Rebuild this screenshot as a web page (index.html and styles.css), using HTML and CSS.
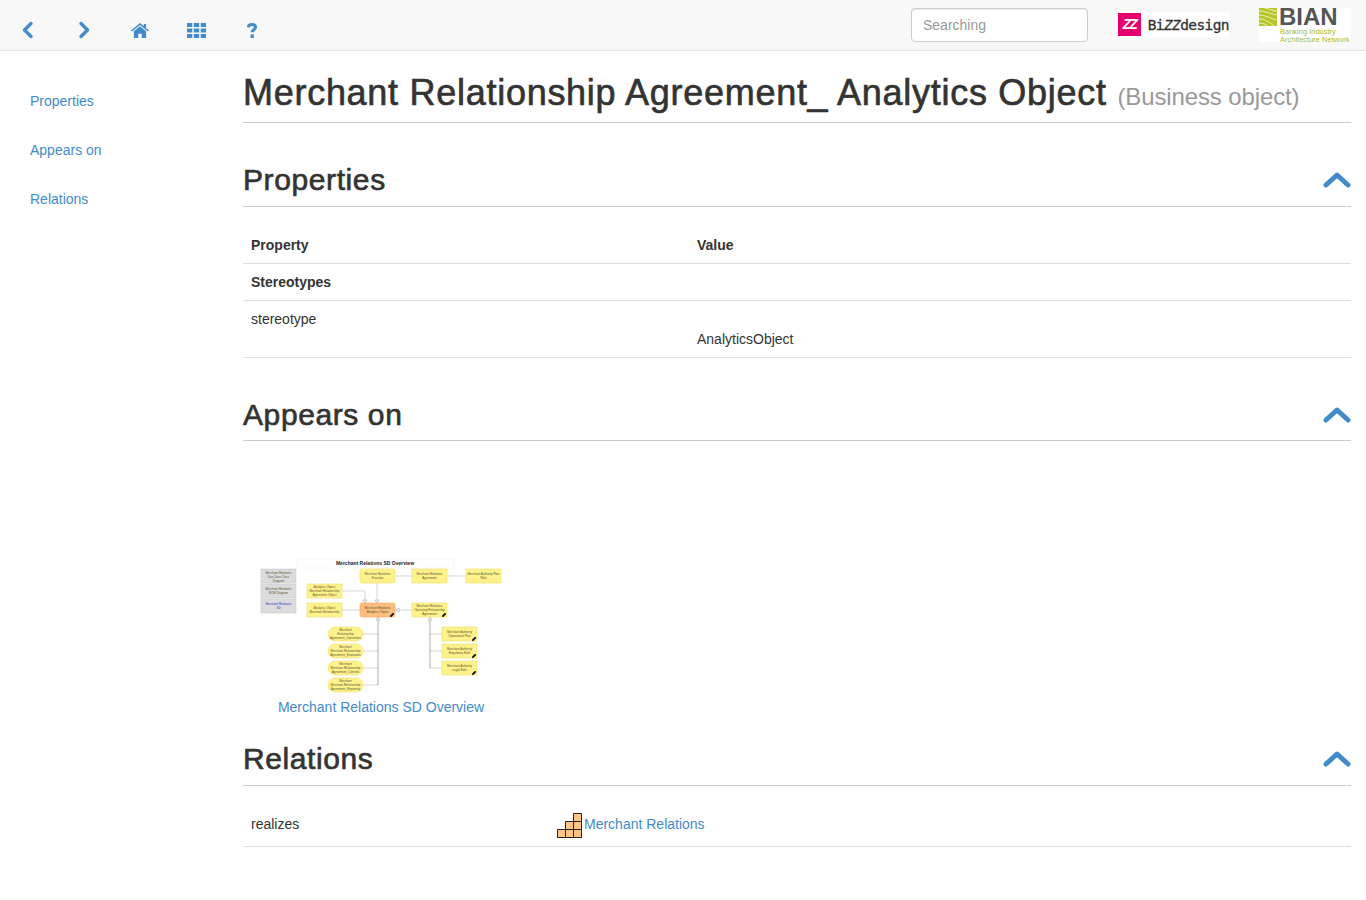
FILE: index.html
```html
<!DOCTYPE html>
<html lang="en">
<head>
<meta charset="UTF-8">
<meta name="viewport" content="width=device-width, initial-scale=1.0">
<title>Merchant Relationship Agreement_ Analytics Object</title>
<link rel="stylesheet" href="styles.css">
</head>
<body>

<div class="navbar">
    <div class="nav_icons">
        <a href="#" class="nav_icon" title="Back">
            <svg width="14" height="18" viewBox="0 0 14 18"><path class="chev" d="M10 2.500 3.500 9l6.500 6.500"/></svg>
        </a>
        <a href="#" class="nav_icon" title="Forward">
            <svg width="14" height="18" viewBox="0 0 14 18"><path class="chev" d="M4 2.500 10.500 9 4 15.500"/></svg>
        </a>
        <a href="#" class="nav_icon" title="Home">
            <svg width="18" height="15" viewBox="0 0 18 15"><path class="fill" d="M9 3.200 2.900 8.300V15h4.400v-4.200h3.400V15h4.400V8.300z"/><path class="fill" d="M9 0 0 7.400l1 1.200L9 2l8 6.600 1-1.200-3-2.500V1h-2.200v2z"/></svg>
        </a>
        <a href="#" class="nav_icon" title="Overview">
            <svg width="19" height="15" viewBox="0 0 19 15"><path class="fill" d="M0 0h5.300v4H0zM6.800 0h5.400v4H6.800zM13.700 0H19v4h-5.300zM0 5.500h5.300v4H0zM6.800 5.500h5.400v4H6.800zM13.700 5.500H19v4h-5.300zM0 11h5.300v4H0zM6.800 11h5.400v4H6.800zM13.700 11H19v4h-5.300z"/></svg>
        </a>
        <a href="#" class="nav_icon" title="Help">
            <svg width="10" height="15" viewBox="0 0 10 15"><path class="q" d="M1.300 4.300C1.400 2.600 2.800 1.500 4.900 1.500c2.100 0 3.600 1.100 3.600 2.800 0 2.400-3.300 2.500-3.300 5"/><path class="fill" d="M3.600 11.300h3.200V15H3.600z"/></svg>
        </a>
    </div>
    <input class="search" type="text" placeholder="Searching">
    <div class="bizz_logo">
        <span class="bizz_mark">ZZ</span>
        <span class="bizz_name">Bi<i>ZZ</i>design</span>
    </div>
    <div class="bian_logo">
        <svg class="bian_mark" width="18" height="18" viewBox="0 0 18 18">
            <rect width="18" height="18" fill="#b5c727"/>
            <path class="bian_lines" d="M0 3C7 3 12 6 18 7M0 7c6 0 10 3 18 5M0 11c5 0 9 2 15 7M0 15c3 0 6 1 9 3M6 0c4 1 8 3 12 3"/>
        </svg>
        <div class="bian_text">
            <div class="bian_name">BIAN</div>
            <div class="bian_sub">Banking Industry</div>
            <div class="bian_sub">Architecture Network</div>
        </div>
    </div>
</div>

<div class="page">
    <ul class="side">
        <li><a href="#properties">Properties</a></li>
        <li><a href="#appears">Appears on</a></li>
        <li><a href="#relations">Relations</a></li>
    </ul>

    <div class="content">
        <h1>Merchant Relationship Agreement_ Analytics Object <small>(Business object)</small></h1>

        <div class="sec_head" id="properties">
            <h2>Properties</h2>
            <svg class="collapse" width="28" height="18" viewBox="0 0 28 18"><path d="M3 14 14 4l11 10"/></svg>
        </div>
        <table class="props">
            <tr><th class="col_prop">Property</th><th>Value</th></tr>
            <tr><th colspan="2">Stereotypes</th></tr>
            <tr><td>stereotype</td><td class="val">AnalyticsObject</td></tr>
        </table>

        <div class="sec_head appears" id="appears">
            <h2>Appears on</h2>
            <svg class="collapse" width="28" height="18" viewBox="0 0 28 18"><path d="M3 14 14 4l11 10"/></svg>
        </div>
        <div class="thumb">
            <svg class="diagram" width="246" height="140" viewBox="258 555 246 140">
                <rect class="frame" x="297" y="559" width="157" height="9"/>
                <text class="d_title" x="375" y="564.700">Merchant Relations SD Overview</text>

                <path class="wire" d="M342 591h23v12M342 610h18M377 583v20M395 576h17M447 576h19M412 610h-17M378 685h-15M363 634h15M363 651h15M363 668h15M430 634h12M430 651h12M430 668h12"/>
                <path class="wire dark" d="M378 617v68M430 617v51"/>

                <rect class="legend" x="261" y="569" width="35" height="14"/>
                <rect class="legend" x="261" y="584" width="35" height="14"/>
                <rect class="legend" x="261" y="599" width="35" height="14"/>
                <text class="d_txt" x="278.500" y="573.500">Merchant Relations</text>
                <text class="d_txt" x="278.500" y="577.500">Use Case Class</text>
                <text class="d_txt" x="278.500" y="581.500">Diagram</text>
                <text class="d_txt" x="278.500" y="590">Merchant Relations</text>
                <text class="d_txt" x="278.500" y="594">BOM Diagram</text>
                <text class="d_link" x="278.500" y="605">Merchant Relations</text>
                <text class="d_link" x="278.500" y="609">SD</text>

                <rect class="box" x="307" y="584" width="35" height="14"/>
                <text class="d_txt" x="324.500" y="588">Analytics Object</text>
                <text class="d_txt" x="324.500" y="592">Merchant Relationship</text>
                <text class="d_txt" x="324.500" y="596">Agreement Object</text>
                <rect class="box" x="307" y="603" width="35" height="14"/>
                <text class="d_txt" x="324.500" y="609">Analytics Object</text>
                <text class="d_txt" x="324.500" y="613">Merchant Relationship</text>

                <rect class="box" x="360" y="569" width="35" height="14" rx="2"/>
                <text class="d_txt" x="377.500" y="575">Merchant Relations</text>
                <text class="d_txt" x="377.500" y="579">Function</text>
                <rect class="box" x="412" y="569" width="35" height="14"/>
                <text class="d_txt" x="429.500" y="575">Merchant Relations</text>
                <text class="d_txt" x="429.500" y="579">Agreement</text>
                <rect class="box" x="466" y="569" width="35" height="14"/>
                <text class="d_txt" x="483.500" y="575">Merchant Authority Plan</text>
                <text class="d_txt" x="483.500" y="579">Role</text>

                <rect class="box main" x="360" y="603" width="35" height="14" rx="2"/>
                <text class="d_txt" x="377.500" y="609">Merchant Relations</text>
                <text class="d_txt" x="377.500" y="613">Analytics Object</text>
                <rect class="box" x="412" y="603" width="35" height="14"/>
                <text class="d_txt" x="429.500" y="607">Merchant Relations</text>
                <text class="d_txt" x="429.500" y="611">Operating Relationship</text>
                <text class="d_txt" x="429.500" y="615">Agreement</text>

                <rect class="box" x="442" y="627" width="35" height="14"/>
                <text class="d_txt" x="459.500" y="633">Merchant Authority</text>
                <text class="d_txt" x="459.500" y="637">Operational Plan</text>
                <rect class="box" x="442" y="644" width="35" height="14"/>
                <text class="d_txt" x="459.500" y="650">Merchant Authority</text>
                <text class="d_txt" x="459.500" y="654">Regulatory Role</text>
                <rect class="box" x="442" y="661" width="35" height="14"/>
                <text class="d_txt" x="459.500" y="667">Merchant Authority</text>
                <text class="d_txt" x="459.500" y="671">Legal Role</text>

                <rect class="box" x="328" y="627" width="35" height="14" rx="7"/>
                <text class="d_txt" x="345.500" y="631">Merchant</text>
                <text class="d_txt" x="345.500" y="635">Relationship</text>
                <text class="d_txt" x="345.500" y="639">Agreement_Operations</text>
                <rect class="box" x="328" y="644" width="35" height="14" rx="7"/>
                <text class="d_txt" x="345.500" y="648">Merchant</text>
                <text class="d_txt" x="345.500" y="652">Merchant Relationship</text>
                <text class="d_txt" x="345.500" y="656">Agreement_Evaluation</text>
                <rect class="box" x="328" y="661" width="35" height="14" rx="7"/>
                <text class="d_txt" x="345.500" y="665">Merchant</text>
                <text class="d_txt" x="345.500" y="669">Merchant Relationship</text>
                <text class="d_txt" x="345.500" y="673">Agreement_Controls</text>
                <rect class="box" x="328" y="678" width="35" height="14" rx="7"/>
                <text class="d_txt" x="345.500" y="682">Merchant</text>
                <text class="d_txt" x="345.500" y="686">Merchant Relationship</text>
                <text class="d_txt" x="345.500" y="690">Agreement_Reporting</text>

                <path class="arrow" d="M363 600h4l-2 3zM375 600h4l-2 3zM396 610l3-2v4zM378 617l-2 3h4zM430 617l-2 3h4z"/>
                <path class="tag" d="M390 616l3-3 1 1-3 3zM442 616l3-3 1 1-3 3zM472 640l3-3 1 1-3 3zM472 657l3-3 1 1-3 3zM472 674l3-3 1 1-3 3z"/>
            </svg>
            <a href="#" class="thumb_name">Merchant Relations SD Overview</a>
        </div>

        <div class="sec_head relations" id="relations">
            <h2>Relations</h2>
            <svg class="collapse" width="28" height="18" viewBox="0 0 28 18"><path d="M3 14 14 4l11 10"/></svg>
        </div>
        <div class="rel_row">
            <span class="rel_type">realizes</span>
            <svg class="stairs" width="25" height="25" viewBox="0 0 25 25">
                <path d="M.5 24.500v-8h8v-8h8v-8h8v24zM.5 16.500h16M8.500 24.500v-16M16.500 24.500v-16M8.500 8.500h16M16.500 16.500h8M.5 24.500h24"/>
            </svg>
            <a href="#">Merchant Relations</a>
        </div>
    </div>
</div>

</body>
</html>
```

FILE: styles.css
```css
/* page */
body {
    margin: 0;
    font-family: "Liberation Sans", Arial, sans-serif;
    font-size: 14px;
    line-height: 20px;
    color: #333333;
    background-color: #ffffff;
}
a {
    color: #428bca;
    text-decoration: none;
}

/* top bar */
.navbar {
    display: flex;
    align-items: flex-start;
    height: 50px;
    background-color: #f8f8f8;
    border-bottom: 1px solid #e7e7e7;
}
.nav_icons {
    display: flex;
    margin-right: auto;
}
.nav_icon {
    display: flex;
    align-items: center;
    justify-content: center;
    width: 56px;
    height: 18px;
    margin-top: 21px;
}
.chev {
    fill: none;
    stroke: #428bca;
    stroke-width: 3.400;
    stroke-linecap: round;
    stroke-linejoin: round;
}
.fill {
    fill: #428bca;
}
.q {
    fill: none;
    stroke: #428bca;
    stroke-width: 3;
}
.search {
    box-sizing: border-box;
    width: 177px;
    height: 34px;
    margin: 8px 30px 0 0;
    padding: 6px 11px;
    font-family: inherit;
    font-size: 14px;
    color: #555555;
    background-color: #ffffff;
    border: 1px solid #cccccc;
    border-radius: 4px;
    box-shadow: inset 0 1px 1px rgba(0, 0, 0, 0.075);
}
.search::placeholder {
    color: #999999;
    opacity: 1;
}
.bizz_logo {
    display: flex;
    align-items: center;
    width: 111px;
    height: 25px;
    margin: 12px 30px 0 0;
    background-color: #ffffff;
}
.bizz_mark {
    width: 23px;
    height: 23px;
    font-size: 14px;
    font-style: italic;
    font-weight: bold;
    line-height: 23px;
    letter-spacing: -2px;
    text-align: center;
    color: #ffffff;
    background-color: #e6006e;
}
.bizz_name {
    margin-left: 7px;
    font-family: "DejaVu Sans Mono", monospace;
    font-size: 14.500px;
    letter-spacing: -0.600px;
    color: #333333;
    -webkit-text-stroke: 0.300px #333333;
}
.bian_logo {
    display: flex;
    width: 92px;
    height: 34px;
    margin: 8px 15px 0 0;
    background-color: #ffffff;
}
.bian_mark {
    flex: none;
    margin-right: 2px;
}
.bian_lines {
    fill: none;
    stroke: #ffffff;
    stroke-width: 0.700;
}
.bian_text {
    white-space: nowrap;
}
.bian_name {
    height: 20px;
    font-size: 24px;
    font-weight: bold;
    line-height: 17px;
    color: #555555;
}
.bian_sub {
    height: 7.500px;
    margin-left: 1px;
    font-size: 7.500px;
    line-height: 7px;
    color: #a9bd1c;
}

/* layout */
.page {
    display: flex;
}
.side {
    box-sizing: border-box;
    flex: none;
    width: 243px;
    margin: 0;
    padding: 40px 0 0 30px;
    list-style: none;
}
.side li {
    height: 49px;
}
.content {
    flex: 1;
    min-width: 0;
    margin-right: 15px;
}

/* headings */
h1,
h2 {
    font-weight: normal;
    -webkit-text-stroke: 0.650px #333333;
}
h1 {
    margin: 21px 0 0;
    padding-bottom: 8px;
    font-size: 36px;
    line-height: 42px;
    letter-spacing: 0.720px;
    border-bottom: 1px solid #cccccc;
}
h1 small {
    font-size: 24px;
    line-height: 1;
    letter-spacing: -0.120px;
    color: #999999;
    -webkit-text-stroke: 0;
}
.sec_head {
    display: flex;
    align-items: center;
    justify-content: space-between;
    margin-top: 37px;
    padding-bottom: 7px;
    border-bottom: 1px solid #cccccc;
}
.sec_head.appears {
    padding-bottom: 6px;
}
.sec_head.relations {
    margin-top: 22px;
}
h2 {
    margin: 0;
    font-size: 30px;
    line-height: 39px;
    letter-spacing: 0.600px;
}
.collapse path {
    fill: none;
    stroke: #428bca;
    stroke-width: 5;
    stroke-linecap: round;
    stroke-linejoin: round;
}

/* tables */
.props {
    width: 100%;
    margin-top: 20px;
    border-collapse: collapse;
}
.props th,
.props td {
    padding: 8px;
    text-align: left;
    vertical-align: top;
    border-bottom: 1px solid #dddddd;
}
.col_prop {
    width: 430px;
}
.props .val {
    padding-top: 28px;
}

/* diagram thumbnail */
.thumb {
    display: flex;
    flex-direction: column;
    align-items: center;
    width: 276px;
    margin-top: 114px;
}
.diagram {
    display: block;
}
.frame {
    fill: #ffffff;
    stroke: #eeeeee;
    stroke-width: 0.500;
}
.d_title {
    font-size: 5px;
    font-weight: bold;
    text-anchor: middle;
    fill: #222222;
}
.d_txt {
    font-size: 3px;
    text-anchor: middle;
    fill: #555533;
}
.d_link {
    font-size: 3px;
    text-anchor: middle;
    fill: #3333cc;
}
.legend {
    fill: #dcdcdc;
    stroke: #c4c4c4;
    stroke-width: 0.500;
}
.box {
    fill: #fff28a;
    stroke: #efe27a;
    stroke-width: 0.700;
}
.box.main {
    fill: #fdbd7d;
    stroke: #f3b070;
}
.wire {
    fill: none;
    stroke: #c4c4c4;
    stroke-width: 0.700;
}
.wire.dark {
    stroke: #888888;
}
.arrow {
    fill: #ffffff;
    stroke: #999999;
    stroke-width: 0.500;
}
.tag {
    fill: #111111;
    stroke: #111111;
    stroke-width: 0.600;
}
.thumb_name {
    margin-top: 2px;
}

/* relations */
.rel_row {
    display: flex;
    align-items: center;
    height: 44px;
    padding: 16px 0 0 8px;
    border-bottom: 1px solid #dddddd;
}
.rel_type {
    width: 306px;
}
.stairs {
    margin: 2px 2px 0 0;
    fill: #fdc484;
    stroke: #222222;
    stroke-width: 1;
}
```
